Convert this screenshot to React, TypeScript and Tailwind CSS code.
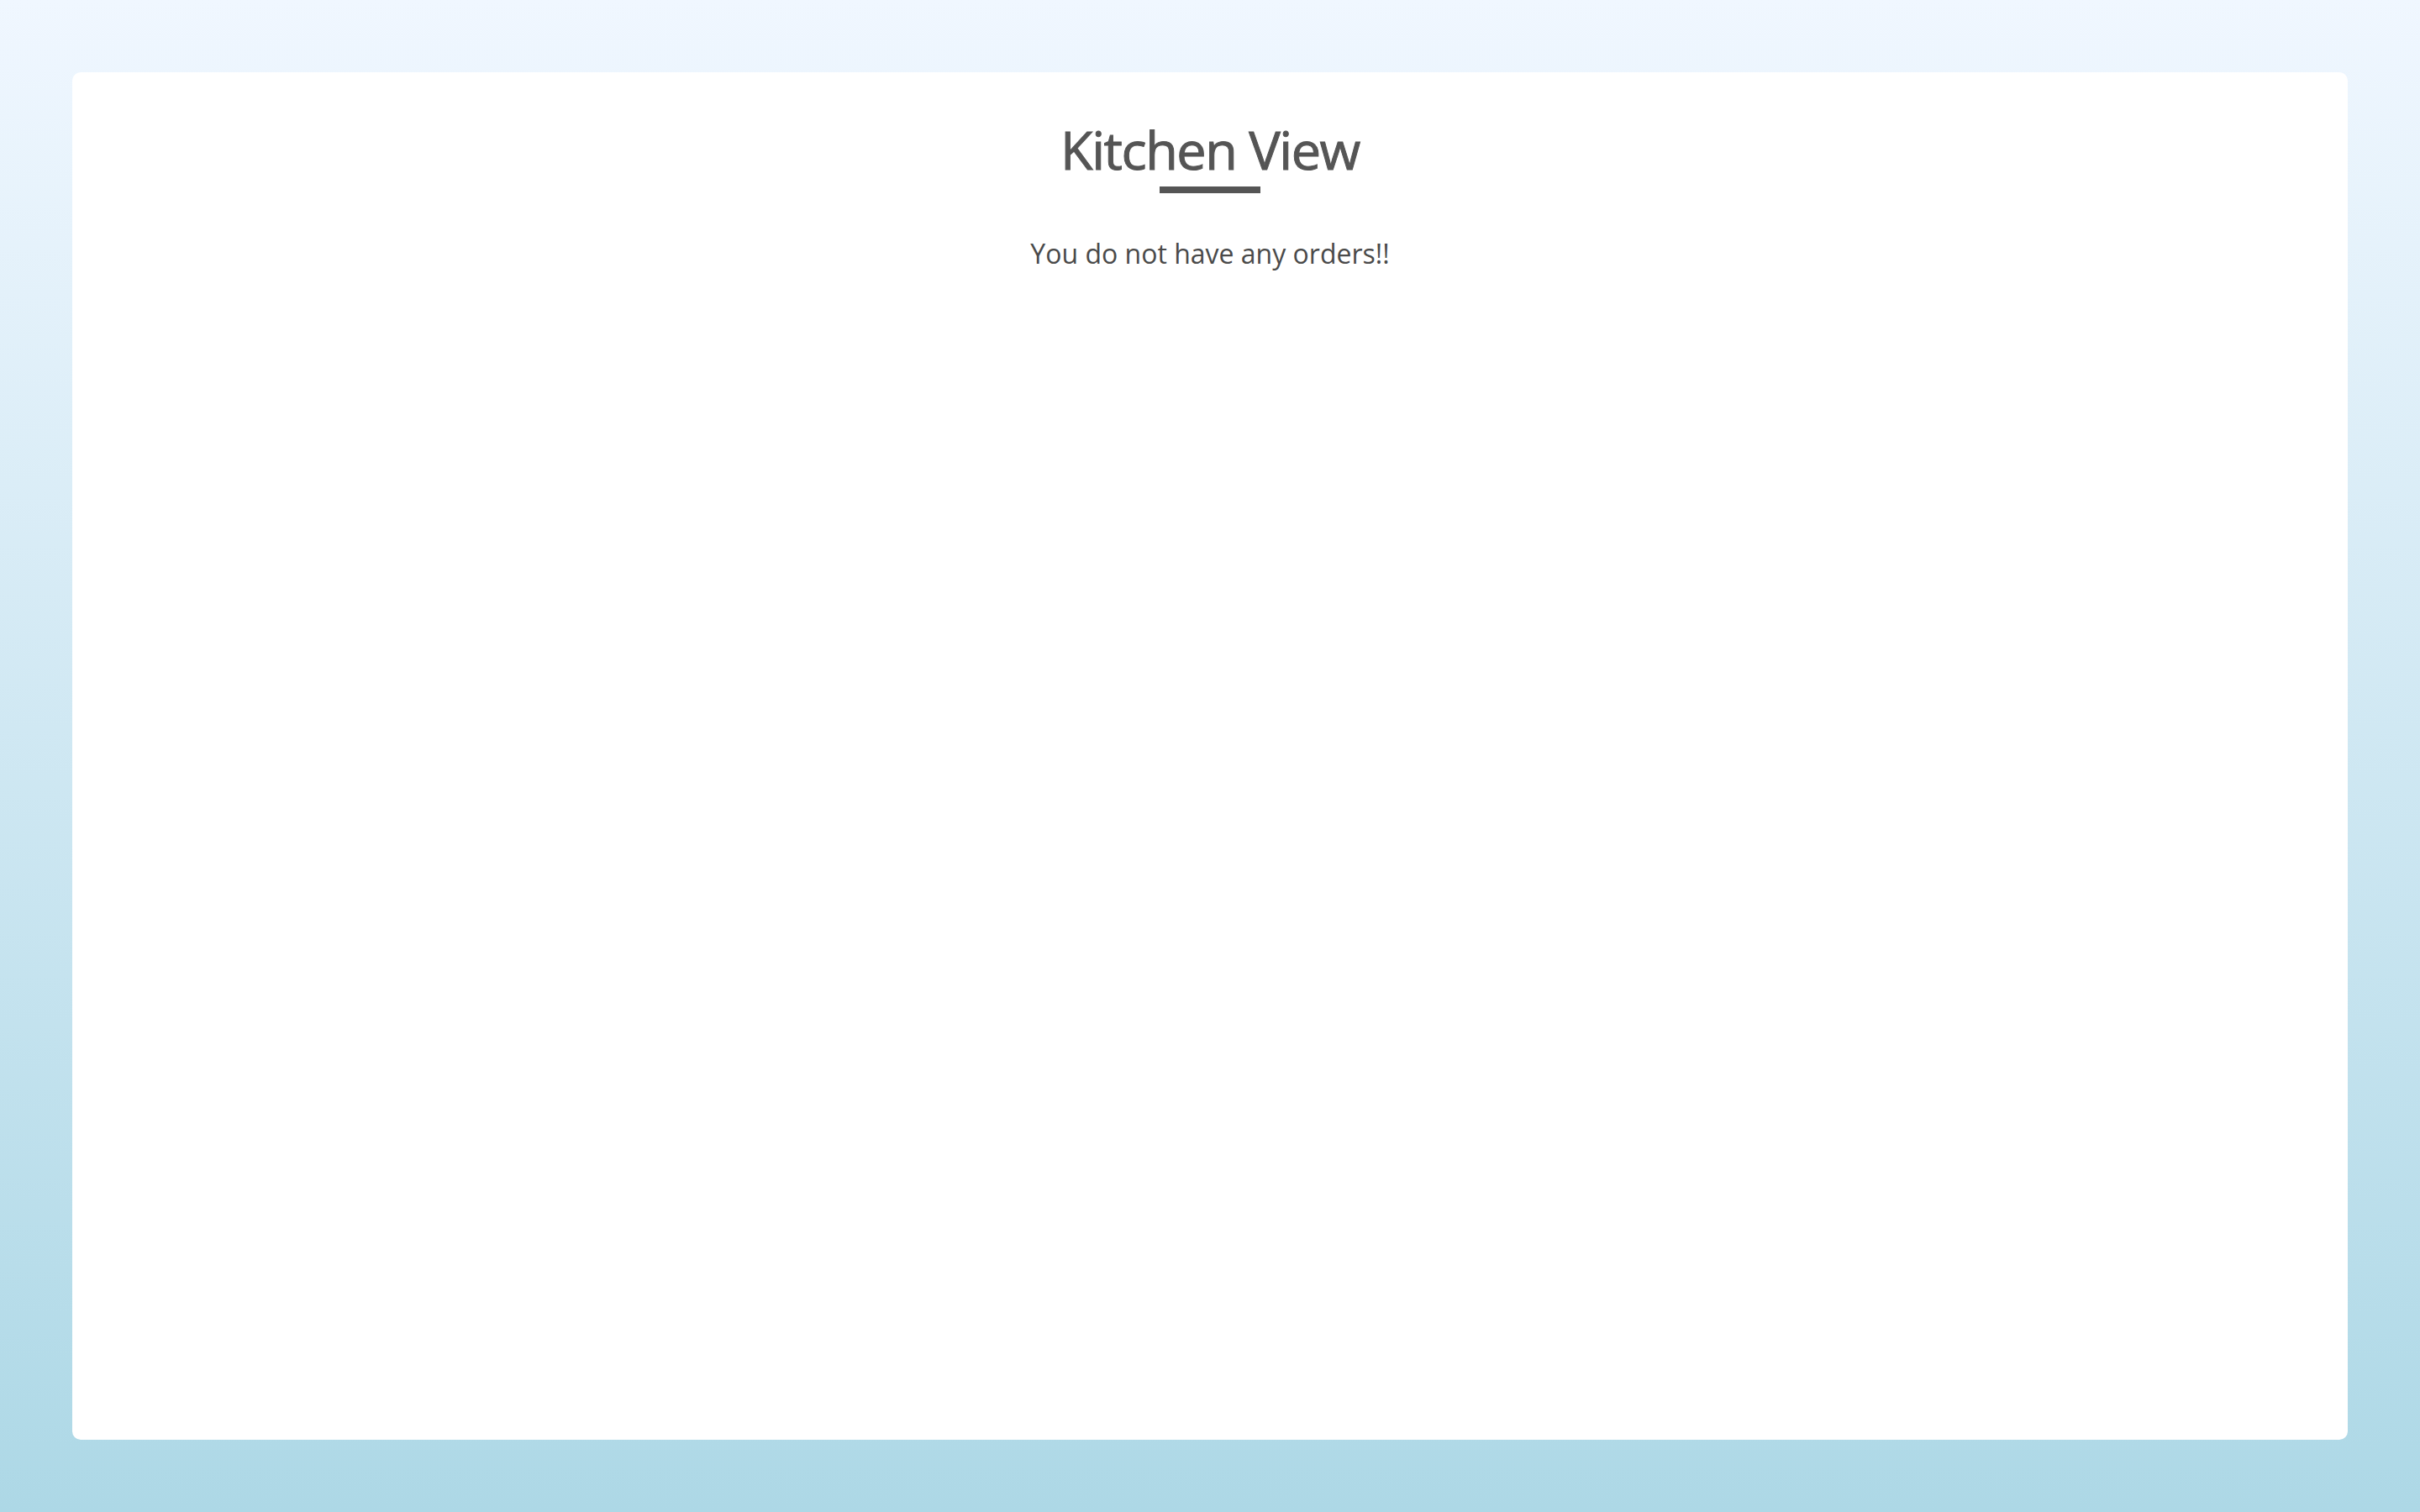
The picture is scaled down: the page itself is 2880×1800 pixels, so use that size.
export default function App() {
  return (
    <div
      className="min-h-screen w-full bg-gradient-to-b from-[#f0f7ff] to-[#add8e6] p-[86px] flex"
      style={{ fontFamily: '"Open Sans", "Noto Sans", sans-serif' }}
    >
      <div className="flex-1 bg-white rounded-[10px] flex flex-col items-center pt-[54px]">
        <h1 className="text-[63px] leading-[1.2] font-medium text-[#555555] tracking-[-1.5px] [-webkit-text-stroke:1px_#555555]">
          Kitchen View
        </h1>
        <div className="mt-[6px] w-[120px] h-[8px] bg-[#555555]" />
        <p className="mt-[48px] text-[32px] leading-[1.5] text-[#4a4a4a]">You do not have any orders!!</p>
      </div>
    </div>
  );
}
